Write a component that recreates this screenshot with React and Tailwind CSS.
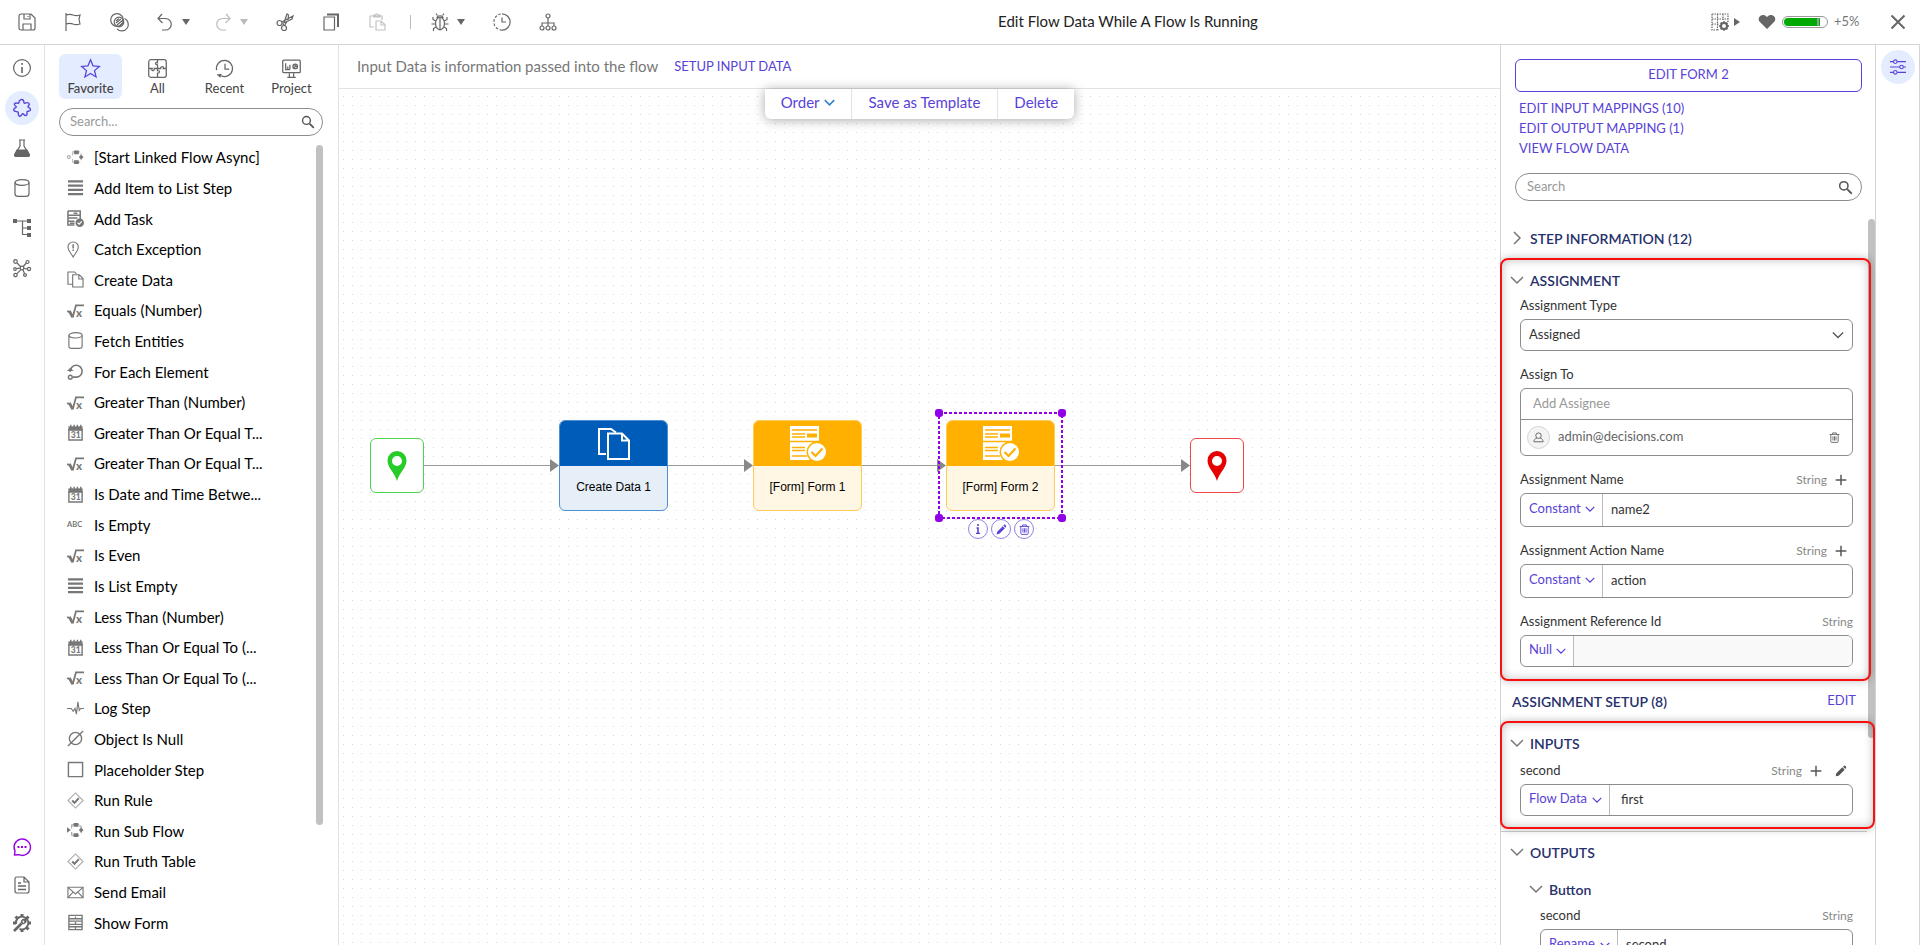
import React, { useState } from "react";

const ICONS = {
  save: <><path d="M1 3a2 2 0 0 1 2-2h10l4 4v10a2 2 0 0 1-2 2H3a2 2 0 0 1-2-2z" /><path d="M6 1v5h6V1M10 3v1M5 17v-6h8v6" /></>,
  flag: <path d="M2 0v18M2 2c3-1 5-1 7 0s4 1 7 0l-1 4 1 5c-3 1-5 1-7 0s-4-1-7 0" />,
  rings: <><circle cx="7" cy="7" r="6.3" /><circle cx="9" cy="9" r="4.8" /><path d="M14.5 5.500A6.500 6.500 0 1 1 7 15.800M6 10l5-4M7 12l6-5M6 8l3-2.500M9.500 13l3.500-3" /></>,
  undo: <path d="M6 1 2 5.500 6.500 10M2 5.500h7.500a5.500 5.500 0 0 1 0 11.500H6" />,
  redo: <path d="M12 1l4 4.500-4.500 4.500M16 5.500H8.500a5.500 5.500 0 0 0 0 11.500H12" />,
  cut: <><circle cx="3.500" cy="10" r="2.500" /><circle cx="8" cy="15" r="2.500" /><path d="M5.700 9 17 3l-1 3-9.500 4.500M7 12.500 11 1l1.500 1-.5 5M8.500 12.500 11 8.500" /></>,
  copy: <><path d="M2 4h10.500v13H2z" /><path d="M5 1.500h11V14" strokeWidth="2" /></>,
  paste: <><path d="M6 14H2V3h12v4M5.500 4V2h2c.3-1.500 2-1.500 2.500 0h2v2z" /><path d="M8 8h5l4 3.500V17H8zM13 8v4h4" /></>,
  bug: <><ellipse cx="9" cy="10.500" rx="4.500" ry="6.300" /><path d="M9 5v12M6 5c0-3 6-3 6 0M6.500 2.500 5 .5M11.500 2.500 13 .5M4.700 8 2 6.500V4M13.300 8 16 6.500V4M4.500 11H.5M13.500 11h4M5 14l-2.500 1.500V18M13 14l2.500 1.500V18" /></>,
  clock: <><path d="M9 .9a8.100 8.100 0 0 1 0 16.200" /><path d="M9 17.100A8.100 8.100 0 0 1 9 .9" strokeDasharray="2.500 1.800" /><path d="M9 4.500V9h4" /></>,
  tree: <><circle cx="9" cy="3" r="2" /><circle cx="3" cy="15" r="2" /><circle cx="9" cy="15" r="2" /><circle cx="15" cy="15" r="2" /><path d="M9 5v8M3 13v-3h12v3" /></>,
  grid: <><path d="M1 1h16v8M1 1v16h7M1 6h16M1 11h7M6.500 1v16M12 1v6" strokeDasharray="1.500 1" /><circle cx="13" cy="13" r="3" strokeWidth="2" /><path d="M13 8.200v1.500M13 16.300v1.500M8.200 13h1.500M16.300 13h1.500M9.600 9.600l1 1M15.400 15.400l1 1M9.600 16.400l1-1M15.400 10.600l1-1" strokeWidth="1.800" /></>,
  heart: <path d="M9 16 1.500 8.500C-1.500 4 5-1 9 4c4-5 10.500 0 7.500 4.500z" fill="currentColor" stroke="none" />,
  close: <path d="M2.500 2.500l13 13M15.500 2.500l-13 13" strokeWidth="2" />,
  info: <><circle cx="9" cy="9" r="8.400" /><path d="M9 8v6M9 4v1.800" strokeWidth="1.600" /></>,
  puzzle: <path d="M6 3.500C5.500 1 9-.5 10.500 1.500c.7 1.200-.2 2.300 1 2.800 1.200.3 2.500-1.500 4-.3C17.500 5.500 15 6.500 15 7.800c0 1 2.500.7 2.500 2.700 0 2.300-3 1.300-3.500 2.300s1 2.500-.7 3.600c-1.800.9-2.500-1.800-3.500-1.800s-1.200 3-3.300 2.700c-2-.3-.7-3.200-1.500-4.300-.9-.8-3.700.3-4.300-2C.3 9 3.300 9 3.300 8S.5 6.500 1.500 4.700C3 2.700 5.300 5.500 6 3.500z" strokeWidth="1.400" />,
  flask: <><path d="M6 1h6M7 1v6L2 15.500C1.500 17 2 17.500 3 17.500h12c1 0 1.500-.5 1-2L11 7V1" /><path d="M4 11h10l2.500 5-1 1.500h-13l-1-1.500z" fill="currentColor" /></>,
  db: <><ellipse cx="9" cy="3.500" rx="7" ry="2.800" /><path d="M2 3.500V15c0 1.500 1 2.300 3 2.300h8c2 0 3-.8 3-2.300V3.500" /></>,
  hier: <><path d="M2 2h13M9.500 2v13.500H15M9.500 9H15" /><path d="M0 0h4v4H0zM14 0h4v4h-4zM14 7h4v4h-4zM14 14h4v4h-4z" fill="currentColor" stroke="none" /></>,
  network: <><circle cx="9" cy="9" r="1.800" /><circle cx="2.500" cy="2.500" r="1.800" /><circle cx="14.500" cy="3" r="1.500" /><circle cx="16" cy="10" r="1.600" /><circle cx="2" cy="10" r="1.300" /><circle cx="2.500" cy="16" r="1.700" /><circle cx="12" cy="16" r="1.400" /><path d="M4 4l4 4M13.300 4l-3 3.500M14.300 10l-3.500-.7M3.500 9.700l3.500-.5M4 14.700l4-4M11.500 14.500l-1.700-4" /></>,
  chat: <><path d="M1.500 17 2 13A8.200 8.200 0 1 1 6 16.700z" strokeWidth="1.400" /><path d="M4.500 9h2M8 9h2M11.500 9h2" strokeWidth="2" /></>,
  doc: <><path d="M2 2.500C2 1.500 3 1 4 1h7l5 5v9c0 1.500-1 2-2 2H4c-1 0-2-.5-2-2zM11 1v5h5" /><path d="M5 7h3M5 10h8M5 13.500h8" strokeWidth="1.500" /></>,
  gear: <><path d="M4.500 4.500A6.300 6.300 0 1 1 6.500 14.800M3 10a6.300 6.300 0 0 1 1.500-5.500" strokeWidth="2" /><path d="M9 0v3M15.500 2.500l-2 2M18 9h-3M15.500 15.500l-2-2M9 18v-3M2.500 2.500l2 2M0 9h3" strokeWidth="3" /><path d="M1 17l7.500-7.500" strokeWidth="2.600" /><path d="M12.500 5.500c-2.200-.7-4.200.8-3.900 2.900l1 1c2.200.4 3.800-1.400 3.200-3.600l-1.800 1.700z" strokeWidth="1.600" /></>,
  star: <path d="M9 .8l2.400 5.700 6 .5-4.600 4 1.500 6L9 13.800 3.700 17l1.500-6L.6 7l6-.5z" strokeWidth="1.200" />,
  tiles: <><rect x=".7" y=".7" width="16.600" height="16.600" rx="2" /><path d="M9 1v2.500c-2-1-3 2 0 2V9M9 9v2c2.500-.5 2.500 2.500 0 2.500V17M1 9h3c-1.500 2.500 2 3 2 0h3M9 9h3c0-2.500 3.500-2.500 2.500 0H17" /></>,
  recent: <><path d="M1.500 10.500A7.600 7.600 0 1 1 6 16M9.500 4.500v5h4" /><path d="M6.500 14l-5 .8 3.500 3z" fill="currentColor" stroke="none" /></>,
  board: <><rect x=".7" y="1" width="16.600" height="12" rx="1" /><path d="M3.500 4v6h4M5.500 7v3M7.500 5.500V10M7 13.500V17M11 13.500V17M5 17.300h8" /><circle cx="12.500" cy="7" r="2.200" /><path d="M12.500 5v2l-1.500 1.500M12.500 7h2" /></>,
  flow: <><path d="M5 7V3h8M13 4.500h2V12M5 10.500V14h8" strokeOpacity=".7" /><path d="M7 1h5v4H7zM7 12h5v4H7zM12.500 8.500 15 6l2.500 2.500L15 11zM0 5.500l4 3-4 3z" fill="currentColor" stroke="none" /></>,
  linked: <><path d="M6 7V3h8M15 4.500V12M6 10.500V14h8" strokeOpacity=".5" /><circle cx="2" cy="8.500" r="1.500" strokeOpacity=".6" /><path d="M7.500 1.500h5v4h-5zM7.500 12h5v4h-5zM12.500 8.500 15 6l2.500 2.500L15 11z" fill="currentColor" stroke="none" /></>,
  list: <path d="M1 2.500h16M1 7h16M1 11.500h16M1 16h16" strokeWidth="2.200" />,
  task: <><path d="M1 1h13v9M1 1v15h7M1 5.500h13M1 8.500h10M1 12h7M7 3.500h4M3 14h5" strokeWidth="1.600" /><circle cx="13.500" cy="13.500" r="4.500" fill="currentColor" stroke="none" /><path d="M11.300 13.500l1.600 1.600 2.800-3" stroke="#fff" /></>,
  exception: <><path d="M6.500 17C4 12.500 1 10 1 6.500a5.500 5.500 0 0 1 11 0C12 10 9 12.500 6.500 17z" /><path d="M6.500 3.500V8M6.500 9v1.500" strokeWidth="1.600" /></>,
  data: <><path d="M6 14H1V1h7l2 2" /><path d="M6 4h7l4 4v9H6zM12.500 4v4.500H17" /></>,
  root: <><path d="M0 10h2.500" strokeWidth="1.800" /><path d="M2.500 9.500 6 16" strokeWidth="3" /><path d="M6 16.500 9.500 3.500H18" strokeWidth="1.900" /><text x="9.500" y="15.500" fontSize="12" fontWeight="900" fill="currentColor" stroke="none">x</text></>,
  loop: <><path d="M3.500 9.500A6.300 6.300 0 1 1 9.500 15H6" strokeWidth="1.700" /><path d="M0 8.500h7L3.500 5z" fill="currentColor" stroke="none" /><circle cx="3.500" cy="15" r="2" strokeWidth="1.500" /></>,
  cal: <><path d="M2 6h14v11H2z" strokeWidth="1.500" /><path d="M1.500 2.500h15V7h-15z" fill="currentColor" stroke="none" /><path d="M4 .8v3M7.500.8v3M11 .8v3M14.500.8v3" strokeWidth="1.500" /><text x="4" y="15" fontSize="9" fontWeight="900" fill="currentColor" stroke="none">31</text></>,
  abc: <text x="0" y="12" fontSize="8" fontWeight="700" fill="currentColor" stroke="none">ABC</text>,
  pulse: <path d="M0 9h4.500l2 3L8.500 9l1.500 6 1.500-13 1.500 9 1.500-2H18" />,
  none: <><circle cx="9" cy="9" r="6.500" strokeWidth="1.500" /><path d="M1 17 17 1" strokeWidth="1.500" /></>,
  square: <path d="M1.500 1.500h15v15h-15z" strokeWidth="1.500" />,
  rule: <><path d="M9 1 17 9 9 17 1 9z" strokeOpacity=".6" /><path d="M5.500 9l2.500 2.500 4.500-5" strokeWidth="2.200" /></>,
  mail: <><path d="M1 3.500h16v11H1z" /><path d="M1 3.500l8 7 8-7M1 14.500l5.500-6M17 14.500l-5.500-6" /></>,
  form: <path d="M2 1.500h14v15H2zM2 5h14M2 7.500h14M2 11h14M2 13.500h14M9 3v2M9 8.500v2M9 14v2" strokeWidth="1.400" />,
  sliders: <><path d="M0 3h4M8 3h10M0 9h11M15 9h3M0 15h4M8 15h10" strokeWidth="1.400" /><circle cx="6" cy="3" r="2" /><circle cx="13" cy="9" r="2" /><circle cx="6" cy="15" r="2" /></>,
  search: <><circle cx="7" cy="7" r="5" strokeWidth="1.800" /><path d="M11 11l5.500 5.500" strokeWidth="2.200" /></>,
  plus: <path d="M9 1v16M1 9h16" strokeWidth="2.200" />,
  pencil: <path d="M1 17l1-4.500L11 3.500 14.500 7l-9 9zM12 2.500l1.500-1.500c1-.8 4 2 3.200 3.200L15.500 6z" fill="currentColor" stroke="none" />,
  trash: <path d="M1 4h16M6 4V1.500h6V4M3 4v11.500c0 1 .5 1.500 1.500 1.500h9c1 0 1.500-.5 1.500-1.500V4M6.500 7v7M9 7v7M11.500 7v7" strokeWidth="1.500" />,
  user: <><circle cx="9" cy="6" r="4.500" strokeWidth="1.600" /><path d="M6.500 9.500C3 11 1.500 13 1.500 16h15c0-3-1.500-5-5-6.500" strokeWidth="1.600" /></>,
};

const Icon = ({ name, className = "size-[18px]" }) => (
  <svg viewBox="0 0 18 18" fill="none" stroke="currentColor" strokeWidth="1.200" className={`shrink-0 overflow-visible ${className}`} aria-hidden="true">
    {ICONS[name]}
  </svg>
);

const Caret = ({ className = "" }) => (
  <svg viewBox="0 0 8 6" className={`h-[6px] w-[8px] shrink-0 ${className}`} aria-hidden="true">
    <path d="M0 0h8L4 6z" fill="currentColor" />
  </svg>
);

const Chevron = ({ className = "", open = true, width = "1.500" }) => (
  <svg viewBox="0 0 14 14" fill="none" stroke="currentColor" strokeWidth={width} className={`shrink-0 ${className}`} aria-hidden="true">
    <path d={open ? "M1 4l6 6 6-6" : "M4 1l6 6-6 6"} />
  </svg>
);

const steps = [
  ["linked", "[Start Linked Flow Async]"],
  ["list", "Add Item to List Step"],
  ["task", "Add Task"],
  ["exception", "Catch Exception"],
  ["data", "Create Data"],
  ["root", "Equals (Number)"],
  ["db", "Fetch Entities"],
  ["loop", "For Each Element"],
  ["root", "Greater Than (Number)"],
  ["cal", "Greater Than Or Equal T..."],
  ["root", "Greater Than Or Equal T..."],
  ["cal", "Is Date and Time Betwe..."],
  ["abc", "Is Empty"],
  ["root", "Is Even"],
  ["list", "Is List Empty"],
  ["root", "Less Than (Number)"],
  ["cal", "Less Than Or Equal To (..."],
  ["root", "Less Than Or Equal To (..."],
  ["pulse", "Log Step"],
  ["none", "Object Is Null"],
  ["square", "Placeholder Step"],
  ["rule", "Run Rule"],
  ["flow", "Run Sub Flow"],
  ["rule", "Run Truth Table"],
  ["mail", "Send Email"],
  ["form", "Show Form"],
];

const tabs = [
  ["star", "Favorite"],
  ["tiles", "All"],
  ["recent", "Recent"],
  ["board", "Project"],
];

const TopBar = () => (
  <header className="flex h-[45px] shrink-0 items-center border-b border-[#d4d4d4] pb-2 pt-[7px] pl-[18px] pr-[13px] text-[#666]">
    <div className="flex items-center gap-7">
      <button aria-label="Save"><Icon name="save" /></button>
      <button aria-label="Checkpoint"><Icon name="flag" /></button>
      <button aria-label="Compare"><Icon name="rings" /></button>
      <button aria-label="Undo" className="flex items-center gap-2"><Icon name="undo" /><Caret /></button>
      <button aria-label="Redo" className="-ml-1 flex items-center gap-2 text-[#bbb]"><Icon name="redo" /><Caret /></button>
      <button aria-label="Cut"><Icon name="cut" /></button>
      <button aria-label="Copy"><Icon name="copy" /></button>
      <button aria-label="Paste" className="text-[#c4c4c4]"><Icon name="paste" /></button>
      <span className="-ml-1 -mr-2 h-[14px] w-px bg-[#bbb]"></span>
      <button aria-label="Debug" className="flex items-center gap-2"><Icon name="bug" /><Caret /></button>
      <button aria-label="History"><Icon name="clock" /></button>
      <button aria-label="Flow structure"><Icon name="tree" /></button>
    </div>
    <h1 className="flex-1 pb-px pr-3 text-center text-[15px] text-[#222]">Edit Flow Data While A Flow Is Running</h1>
    <div className="flex items-center">
      <button aria-label="Grid settings" className="flex items-center gap-1">
        <Icon name="grid" />
        <Caret className="-rotate-90" />
      </button>
      <Icon name="heart" className="ml-[17px] size-[18px]" />
      <div className="ml-[6px] flex h-3 w-[46px] items-center rounded-full border border-[#999] px-px">
        <div className="flex h-2 w-9 justify-end rounded-l-full bg-[#0a0] pr-px"><span className="w-[2px] bg-[#999]"></span></div>
      </div>
      <span className="ml-[6px] w-[27px] text-[13px] text-[#777]">+5%</span>
      <button aria-label="Close" className="ml-7"><Icon name="close" /></button>
    </div>
  </header>
);

const SideRail = () => (
  <nav className="flex w-[45px] shrink-0 flex-col items-center justify-between border-r border-[#e2e2e2] pb-[13px] pt-[6px] text-[#666]">
    <div className="flex flex-col items-center gap-[6px]">
      <button aria-label="Info" className="flex size-[34px] items-center justify-center"><Icon name="info" /></button>
      <button aria-label="Steps" className="flex size-[34px] items-center justify-center rounded-full bg-[#e4edff] text-[#5842d8]"><Icon name="puzzle" /></button>
      <button aria-label="Test" className="flex size-[34px] items-center justify-center"><Icon name="flask" /></button>
      <button aria-label="Data" className="flex size-[34px] items-center justify-center"><Icon name="db" /></button>
      <button aria-label="Outline" className="flex size-[34px] items-center justify-center"><Icon name="hier" /></button>
      <button aria-label="Dependencies" className="flex size-[34px] items-center justify-center"><Icon name="network" /></button>
    </div>
    <div className="flex flex-col items-center gap-5">
      <button aria-label="Comments" className="text-[#9500e8]"><Icon name="chat" /></button>
      <button aria-label="Documentation"><Icon name="doc" /></button>
      <button aria-label="Settings"><Icon name="gear" /></button>
    </div>
  </nav>
);

const Palette = () => {
  const [tab, setTab] = useState("Favorite");

  return (
    <aside className="flex w-[294px] shrink-0 flex-col border-r border-[#e2e2e2]">
      <div className="flex gap-1 pl-[14px] pt-[9px]">
        {tabs.map(([icon, label]) => (
          <button
            key={label}
            onClick={() => setTab(label)}
            className={`flex h-[45px] w-[63px] flex-col items-center rounded-md pt-[5px] text-[13px] leading-4 text-[#444] ${tab === label ? "bg-[#e4edff] font-medium" : ""}`}
          >
            <Icon name={icon} className={tab === label ? "size-[19px] text-[#5842d8]" : "size-[19px] text-[#666]"} />
            <span className="mt-[2px]">{label}</span>
          </button>
        ))}
      </div>
      <div className="ml-[14px] mr-[15px] mt-[9px] flex h-7 shrink-0 items-center rounded-full border border-[#8c8c8c] pl-[10px] pr-[7px] text-[#555]">
        <input aria-label="Search steps" placeholder="Search..." className="min-w-0 flex-1 text-[13px] outline-none placeholder:text-[#999]" />
        <Icon name="search" className="size-[14px]" />
      </div>
      <div className="relative flex min-h-0 flex-1 pb-[7px] pt-[6px]">
        <ul className="grid flex-1 auto-rows-fr pl-[22px]">
          {steps.map(([icon, label], i) => (
            <li key={i} className="flex items-center gap-[10px] text-[#777]">
              <Icon name={icon} className="size-[17px]" />
              <span className="truncate text-[15px] leading-5 text-black">{label}</span>
            </li>
          ))}
        </ul>
        <div className="absolute right-[15px] top-[9px] h-[84%] w-[7px] rounded-full bg-[#c1c1c1]"></div>
      </div>
    </aside>
  );
};

const Pin = ({ className }) => (
  <svg viewBox="0 0 20 30" className={`h-[30px] w-5 ${className}`} aria-hidden="true">
    <path d="M10 30C8 22 .5 17 .5 9.500a9.500 9.500 0 0 1 19 0C19.500 17 12 22 10 30zM10 5a5 5 0 1 0 0 10 5 5 0 0 0 0-10z" fill="currentColor" fillRule="evenodd" />
  </svg>
);

const DataArt = () => (
  <svg viewBox="0 0 32 32" className="size-8" fill="none" stroke="#fff" strokeWidth="2" aria-hidden="true">
    <path d="M8 26H1V1h12l5 3.500" />
    <path d="M10 5.500h14l7 7V31H10zM24 6v6.500h7" />
  </svg>
);

const FormArt = () => (
  <svg viewBox="0 0 36 36" className="size-9" aria-hidden="true">
    <path d="M0 0h29v20L20 34H0z" fill="#fff" />
    <path d="M2 4h25M2 8h13M2 11h13M0 15.500h29M2 21.500h13M2 24.500h13M2 30h15" stroke="#ffb000" strokeWidth="1.500" fill="none" />
    <path d="M17 7.500h10v4H17z" fill="#ffb000" />
    <circle cx="27" cy="26" r="10.500" fill="#ffb000" />
    <circle cx="27" cy="26" r="9" fill="#fff" />
    <path d="M21.500 26l4 4 7-7.500" stroke="#ffb000" strokeWidth="2.200" fill="none" />
  </svg>
);

// x of the arrow's start and end on the canvas
const links = [[85, 220], [328, 414], [522, 607], [716, 851]];

const Canvas = () => (
  <div className="relative flex-1 overflow-hidden font-['Liberation_Sans',Arial,sans-serif]">
    <svg className="absolute inset-0 size-full" aria-hidden="true">
      <pattern id="dots" width="9" height="9" patternUnits="userSpaceOnUse">
        <rect x="4" y="7" width="1" height="1" fill="#d8d8d8" />
      </pattern>
      <rect width="100%" height="100%" fill="url(#dots)" />
    </svg>
    <svg className="absolute left-0 top-[366px] h-5 w-[1000px]" aria-hidden="true">
      {links.map(([from, to]) => (
        <g key={from}>
          <path d={`M${from} 10.500H${to - 8}`} stroke="#999" strokeWidth="1" />
          <path d={`M${to - 9} 4v13l9-6.500z`} fill="#888" />
        </g>
      ))}
    </svg>
    <div className="absolute left-[31px] top-[349px] flex h-[55px] w-[54px] items-center justify-center rounded-md border border-[#4fd44f] bg-white">
      <Pin className="text-[#28cc28]" />
    </div>
    <div className="absolute left-[220px] top-[331px] flex h-[91px] w-[109px] flex-col overflow-hidden rounded-md border border-[#4e8fd3] bg-[#e6eef8]">
      <div className="flex h-[45px] items-center justify-center bg-[#005cb9]"><DataArt /></div>
      <p className="flex flex-1 items-center justify-center pb-[2px] text-xs text-black">Create Data 1</p>
    </div>
    <div className="absolute left-[414px] top-[331px] flex h-[91px] w-[109px] flex-col overflow-hidden rounded-md border border-[#ffcb58] bg-[#fff6e4]">
      <div className="flex h-[45px] items-center justify-center bg-[#ffb000]"><FormArt /></div>
      <p className="flex flex-1 items-center justify-center pb-[2px] text-xs text-black">[Form] Form 1</p>
    </div>
    <div className="absolute left-[607px] top-[331px] flex h-[91px] w-[109px] flex-col overflow-hidden rounded-md border border-[#ffcb58] bg-[#fff6e4]">
      <div className="flex h-[45px] items-center justify-center bg-[#ffb000]"><FormArt /></div>
      <p className="flex flex-1 items-center justify-center pb-[2px] text-xs text-black">[Form] Form 2</p>
    </div>
    <div className="absolute left-[599px] top-[323px] h-[107px] w-[125px]">
      <svg className="size-full" aria-hidden="true">
        <rect x="1" y="1" width="123" height="105" fill="none" stroke="#9200ea" strokeWidth="2" strokeDasharray="3 2" />
      </svg>
      <span className="absolute -left-[3px] -top-[3px] size-2 rounded-[3px] bg-[#9200ea]"></span>
      <span className="absolute -right-[3px] -top-[3px] size-2 rounded-[3px] bg-[#9200ea]"></span>
      <span className="absolute -bottom-[3px] -left-[3px] size-2 rounded-[3px] bg-[#9200ea]"></span>
      <span className="absolute -bottom-[3px] -right-[3px] size-2 rounded-[3px] bg-[#9200ea]"></span>
    </div>
    <div className="absolute left-[629px] top-[430px] flex gap-[3px] text-[#5842d8]">
      <button aria-label="Step info" className="flex size-5 items-center justify-center rounded-full border border-[#8f80e6] bg-white">
        <svg viewBox="0 0 10 10" className="size-[10px]" fill="none" stroke="currentColor" strokeWidth="1.600"><path d="M5 0v2M3.500 4H5v5.500M3 9.500h4" /></svg>
      </button>
      <button aria-label="Edit step" className="flex size-5 items-center justify-center rounded-full border border-[#8f80e6] bg-white"><Icon name="pencil" className="size-[11px]" /></button>
      <button aria-label="Delete step" className="flex size-5 items-center justify-center rounded-full border border-[#8f80e6] bg-white"><Icon name="trash" className="size-[11px]" /></button>
    </div>
    <div className="absolute left-[851px] top-[349px] flex h-[55px] w-[54px] items-center justify-center rounded-md border border-[#f04848] bg-white">
      <Pin className="text-[#e60000]" />
    </div>
  </div>
);

const Workspace = () => (
  <main className="relative flex min-w-0 flex-1 flex-col">
    <div className="flex h-11 shrink-0 items-center gap-4 border-b border-[#e2e2e2] pl-[18px]">
      <p className="text-[15px] text-[#777]">Input Data is information passed into the flow</p>
      <button className="text-[13px] text-[#5842d8]">SETUP INPUT DATA</button>
    </div>
    <Canvas />
    <div className="absolute inset-x-0 top-[44px] flex justify-center">
      <div className="flex h-[30px] divide-x divide-[#e2e2e2] rounded-b-md bg-white text-[15px] text-[#5842d8] shadow-[0_1px_12px_rgba(0,0,0,0.35)]">
        <button className="flex items-center gap-1 px-4 pb-[3px]">Order <Chevron className="size-[11px] text-[#3182c8]" width="2" /></button>
        <button className="px-[17px] pb-[3px]">Save as Template</button>
        <button className="px-4 pb-[3px]">Delete</button>
      </div>
    </div>
  </main>
);

const SectionHeader = ({ title, open = true }) => (
  <button className="flex h-8 items-center gap-[6px] pl-[9px] text-[14px] font-semibold text-[#27306b]">
    <Chevron open={open} className="size-[14px] text-[#777]" />
    {title}
  </button>
);

const Field = ({ id, label, type, plus, edit, children }) => (
  <div>
    <div className="mb-[3px] flex h-5 items-center">
      <label htmlFor={id} className="flex-1 text-[13px] text-[#333]">{label}</label>
      {type && <span className="text-xs text-[#888]">{type}</span>}
      {plus && <button aria-label="Add mapping" className="ml-2 mr-[6px]"><Icon name="plus" className="size-3 text-[#555]" /></button>}
      {edit && <button aria-label="Edit mapping" className="ml-[7px] mr-[6px]"><Icon name="pencil" className="size-3 text-[#555]" /></button>}
    </div>
    {children}
  </div>
);

const MappedInput = ({ id, mode, modeClass, value, boxClass, inputClass = "pl-2", disabled }) => (
  <div className={`flex overflow-hidden rounded-md border border-[#8c8c8c] ${boxClass}`}>
    <div className={`relative flex shrink-0 border-r border-[#bbb] text-[#5842d8] ${modeClass}`}>
      <select aria-label="Mapping type" className="w-full appearance-none pb-[2px] pl-2 text-[13px] outline-none">
        <option>{mode}</option>
      </select>
      <Chevron className="pointer-events-none absolute right-[7px] top-[10px] size-[10px]" width="1.800" />
    </div>
    <input id={id} defaultValue={value} disabled={disabled} className={`min-w-0 flex-1 text-[13px] text-[#333] outline-none disabled:bg-[#f9f9f9] ${inputClass}`} />
  </div>
);

const Highlight = ({ className }) => (
  <div className={`pointer-events-none absolute -left-px z-10 rounded-lg border-2 border-[#f81010] shadow-[0_0_8px_rgba(0,0,0,0.25),inset_0_0_10px_rgba(0,0,0,0.25)] ${className}`}></div>
);

const Properties = () => (
  <aside className="flex w-[375px] shrink-0 flex-col overflow-hidden">
    <div className="flex min-h-0 flex-1 flex-col border-l border-[#d4d4d4]">
      <div className="flex shrink-0 flex-col pl-[14px] pr-[13px] pt-[14px]">
        <button className="h-[33px] rounded-md border border-[#5842d8] pb-[2px] text-[13px] text-[#5842d8]">EDIT FORM 2</button>
        <div className="mt-[6px] flex flex-col items-start pl-1 text-[13px] leading-5 text-[#5842d8]">
          <a href="#inputs">EDIT INPUT MAPPINGS (10)</a>
          <a href="#outputs">EDIT OUTPUT MAPPING (1)</a>
          <a href="#data">VIEW FLOW DATA</a>
        </div>
        <div className="mt-[15px] flex h-7 items-center rounded-full border border-[#8c8c8c] pl-[11px] pr-2 text-[#555]">
          <input aria-label="Search properties" placeholder="Search" className="min-w-0 flex-1 text-[13px] outline-none placeholder:text-[#999]" />
          <Icon name="search" className="size-[15px]" />
        </div>
      </div>

      <div className="relative mt-[17px] min-h-0 flex-1">
        <div className="absolute right-0 top-px h-[519px] w-[7px] rounded-full bg-[#c1c1c1]"></div>

        <div className="py-1"><SectionHeader title="STEP INFORMATION (12)" open={false} /></div>

        <section className="relative pb-[14px] pt-[6px]">
          <Highlight className="inset-y-0 right-1" />
          <SectionHeader title="ASSIGNMENT" />
          <div className="flex flex-col gap-[14px] pl-[19px] pr-[22px]">
            <Field id="type" label="Assignment Type">
              <div className="relative flex h-8">
                <select id="type" className="w-full appearance-none rounded-md border border-[#8c8c8c] pl-2 text-[13px] text-[#333] outline-none">
                  <option>Assigned</option>
                </select>
                <Chevron className="pointer-events-none absolute right-[9px] top-[10px] size-3 text-[#555]" />
              </div>
            </Field>
            <Field id="assignee" label="Assign To">
              <div className="flex h-[68px] flex-col divide-y divide-[#8c8c8c] rounded-md border border-[#8c8c8c]">
                <input id="assignee" placeholder="Add Assignee" className="h-[31px] pb-[2px] pl-3 text-[13px] outline-none placeholder:text-[#999]" />
                <div className="flex flex-1 items-center pb-px pl-[6px] pr-3 text-[#666]">
                  <span className="flex size-[23px] items-center justify-center rounded-full border border-[#d4d4d4] bg-[#f4f4f4]"><Icon name="user" className="size-[11px]" /></span>
                  <span className="ml-2 flex-1 text-[13px]">admin@decisions.com</span>
                  <button aria-label="Remove assignee"><Icon name="trash" className="size-[11px]" /></button>
                </div>
              </div>
            </Field>
            <Field id="name" label="Assignment Name" type="String" plus>
              <MappedInput id="name" mode="Constant" modeClass="w-[82px]" value="name2" boxClass="h-[34px]" />
            </Field>
            <Field id="action" label="Assignment Action Name" type="String" plus>
              <MappedInput id="action" mode="Constant" modeClass="w-[82px]" value="action" boxClass="h-[34px]" />
            </Field>
            <Field id="ref" label="Assignment Reference Id" type="String">
              <MappedInput id="ref" mode="Null" modeClass="w-[53px]" value="" boxClass="h-8" disabled />
            </Field>
          </div>
        </section>

        <div className="flex h-10 items-center justify-between pl-[11px] pr-[19px]">
          <h2 className="text-[14px] font-semibold text-[#27306b]">ASSIGNMENT SETUP (8)</h2>
          <button className="text-[13px] text-[#5842d8]">EDIT</button>
        </div>

        <section className="relative pb-[15px] pt-[6px]">
          <Highlight className="bottom-[2px] right-0 top-0" />
          <SectionHeader title="INPUTS" />
          <div className="pl-[19px] pr-[22px] pt-[2px]">
            <Field id="second" label="second" type="String" plus edit>
              <MappedInput id="second" mode="Flow Data" modeClass="w-[89px]" value="first" boxClass="h-8" inputClass="pl-[11px]" />
            </Field>
          </div>
        </section>

        <section className="mr-2 border-t border-[#ccc] pt-1">
          <SectionHeader title="OUTPUTS" />
          <div className="pl-[19px] pt-[5px]">
            <SectionHeader title="Button" />
            <div className="pl-[20px] pr-[14px] pt-px">
              <Field id="button-second" label="second" type="String">
                <MappedInput id="button-second" mode="Rename" modeClass="w-[77px]" value="second" boxClass="h-8" />
              </Field>
            </div>
          </div>
        </section>
      </div>
    </div>
  </aside>
);

const App = () => {
  return (
    <div className="flex h-screen flex-col overflow-hidden bg-white font-[Lato,sans-serif]">
      <TopBar />
      <div className="flex min-h-0 flex-1">
        <SideRail />
        <Palette />
        <Workspace />
        <Properties />
        <div className="flex w-[45px] shrink-0 justify-center border-x border-[#d4d4d4] pt-[5px]">
          <button aria-label="Properties" className="flex size-[34px] items-center justify-center rounded-full bg-[#e4edff] text-[#5842d8]">
            <Icon name="sliders" className="h-4 w-[18px]" />
          </button>
        </div>
      </div>
    </div>
  );
};

export default App;
